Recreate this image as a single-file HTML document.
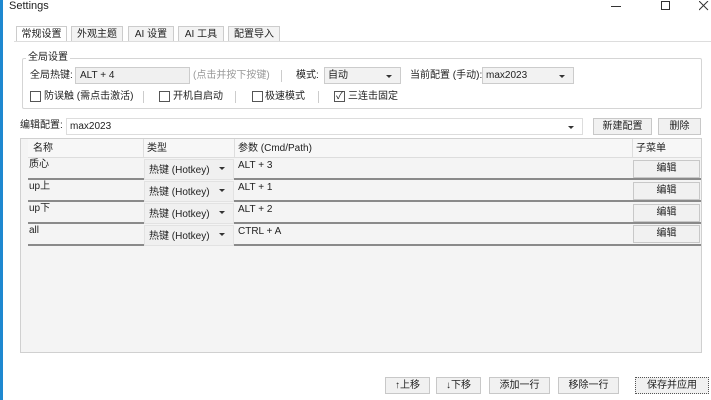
<!DOCTYPE html>
<html><head><meta charset="utf-8"><style>
*{box-sizing:border-box;margin:0;padding:0}
body{width:711px;height:400px;background:#fff;position:relative;overflow:hidden;font-family:"Liberation Sans","Noto Sans CJK SC",sans-serif;font-size:10px;line-height:12px;color:#222}
.a{position:absolute;white-space:nowrap}
.blue{left:0;top:0;width:3px;height:400px;background:#1e88d0}
.tab{border:1px solid #ccc;border-bottom:none;background:#f3f3f3;height:16px;top:26px;text-align:center;line-height:15px}
.box{border:1px solid #d5d5d5}
.in{border:1px solid #ccc;background:#f0f0f0;height:17px;line-height:15px;padding-left:4px}
.cb{border:1px solid #ccc;background:#f2f2f2;height:17px;line-height:15px;padding-left:3px}
.cb:after{content:"";position:absolute;right:8px;top:7px;border:3px solid transparent;border-top:3px solid #333}
.chk{width:11px;height:11px;border:1px solid #555;background:#fff}
.btn{border:1px solid #c8c8c8;background:#f1f1f1;height:17px;line-height:15px;text-align:center}
.sep{width:1px;height:12px;background:#ccc}
.row{left:28px;width:673px;height:22px;border-bottom:2px solid #8a8a8a}
.sel{border:1px solid #e2e2e2;background:#f0f0f0;height:20px;line-height:20px;padding-left:4px}
</style></head><body>
<div class="a blue"></div>
<div class="a" style="left:9px;top:0px;font-size:11px">Settings</div>
<div class="a" style="left:611px;top:6px;width:10px;height:1px;background:#333"></div>
<div class="a" style="left:661px;top:1px;width:9px;height:9px;border:1px solid #333"></div>
<svg class="a" style="left:699px;top:1px" width="10" height="10"><path d="M0 0L9 9M9 0L0 9" stroke="#333" stroke-width="1"/></svg>

<div class="a tab" style="left:16px;width:51px;background:#fff">常规设置</div>
<div class="a tab" style="left:71px;width:52px">外观主题</div>
<div class="a tab" style="left:128px;width:46px">AI 设置</div>
<div class="a tab" style="left:178px;width:46px">AI 工具</div>
<div class="a tab" style="left:228px;width:52px">配置导入</div>
<div class="a" style="left:14px;top:41px;width:697px;height:1px;background:#ddd"></div>

<div class="a box" style="left:22px;top:58px;width:680px;height:51px;border-radius:2px"></div>
<div class="a" style="left:26px;top:52px;background:#fff;padding:0 2px">全局设置</div>
<div class="a" style="left:30px;top:70px">全局热键:</div>
<div class="a in" style="left:75px;top:67px;width:115px">ALT + 4</div>
<div class="a" style="left:193px;top:70px;color:#999">(点击并按下按键)</div>
<div class="a sep" style="left:281px;top:70px"></div>
<div class="a" style="left:296px;top:70px">模式:</div>
<div class="a cb" style="left:324px;top:67px;width:77px">自动</div>
<div class="a" style="left:410px;top:70px">当前配置 (手动):</div>
<div class="a cb" style="left:482px;top:67px;width:92px">max2023</div>
<div class="a chk" style="left:30px;top:91px"></div>
<div class="a" style="left:44px;top:91px">防误触 (需点击激活)</div>
<div class="a sep" style="left:143px;top:91px"></div>
<div class="a chk" style="left:159px;top:91px"></div>
<div class="a" style="left:173px;top:91px">开机自启动</div>
<div class="a sep" style="left:235px;top:91px"></div>
<div class="a chk" style="left:252px;top:91px"></div>
<div class="a" style="left:265px;top:91px">极速模式</div>
<div class="a sep" style="left:318px;top:91px"></div>
<div class="a chk" style="left:334px;top:91px;font-size:10px;line-height:9px;text-align:center">✓</div>
<div class="a" style="left:348px;top:91px">三连击固定</div>

<div class="a" style="left:20px;top:120px">编辑配置:</div>
<div class="a cb" style="left:66px;top:118px;width:517px;background:#fff;border-color:#ddd">max2023</div>
<div class="a btn" style="left:593px;top:118px;width:59px">新建配置</div>
<div class="a btn" style="left:658px;top:118px;width:43px">删除</div>

<div class="a" style="left:20px;top:138px;width:682px;height:215px;border:1px solid #d0d0d0;background:#f4f4f4"></div>
<div class="a" style="left:28px;top:139px;width:673px;height:19px;background:#f7f7f7;border-bottom:1px solid #ddd"></div>
<div class="a" style="left:143px;top:139px;width:1px;height:19px;background:#ddd"></div>
<div class="a" style="left:234px;top:139px;width:1px;height:19px;background:#ddd"></div>
<div class="a" style="left:632px;top:139px;width:1px;height:19px;background:#ddd"></div>
<div class="a" style="left:33px;top:143px">名称</div>
<div class="a" style="left:147px;top:143px">类型</div>
<div class="a" style="left:238px;top:143px">参数 (Cmd/Path)</div>
<div class="a" style="left:636px;top:143px">子菜单</div>

<div class="a row" style="top:158px"></div>
<div class="a row" style="top:180px"></div>
<div class="a row" style="top:202px"></div>
<div class="a row" style="top:224px"></div>

<div class="a" style="left:29px;top:159px">质心</div>
<div class="a" style="left:29px;top:181px">up上</div>
<div class="a" style="left:29px;top:203px">up下</div>
<div class="a" style="left:29px;top:225px">all</div>

<div class="a sel cb" style="left:144px;top:159px;width:90px;height:21px;line-height:21px">热键 (Hotkey)</div>
<div class="a sel cb" style="left:144px;top:181px;width:90px;height:21px;line-height:21px">热键 (Hotkey)</div>
<div class="a sel cb" style="left:144px;top:203px;width:90px;height:21px;line-height:21px">热键 (Hotkey)</div>
<div class="a sel cb" style="left:144px;top:225px;width:90px;height:21px;line-height:21px">热键 (Hotkey)</div>

<div class="a" style="left:238px;top:160px">ALT + 3</div>
<div class="a" style="left:238px;top:182px">ALT + 1</div>
<div class="a" style="left:238px;top:204px">ALT + 2</div>
<div class="a" style="left:238px;top:226px">CTRL + A</div>

<div class="a btn" style="left:633px;top:160px;width:67px;height:18px">编辑</div>
<div class="a btn" style="left:633px;top:182px;width:67px;height:18px">编辑</div>
<div class="a btn" style="left:633px;top:204px;width:67px;height:18px">编辑</div>
<div class="a btn" style="left:633px;top:225px;width:67px;height:18px">编辑</div>

<div class="a btn" style="left:385px;top:377px;width:45px">↑上移</div>
<div class="a btn" style="left:436px;top:377px;width:45px">↓下移</div>
<div class="a btn" style="left:489px;top:377px;width:61px">添加一行</div>
<div class="a btn" style="left:558px;top:377px;width:61px">移除一行</div>
<div class="a btn" style="left:635px;top:377px;width:74px;border:1px dotted #555">保存并应用</div>
</body></html>
